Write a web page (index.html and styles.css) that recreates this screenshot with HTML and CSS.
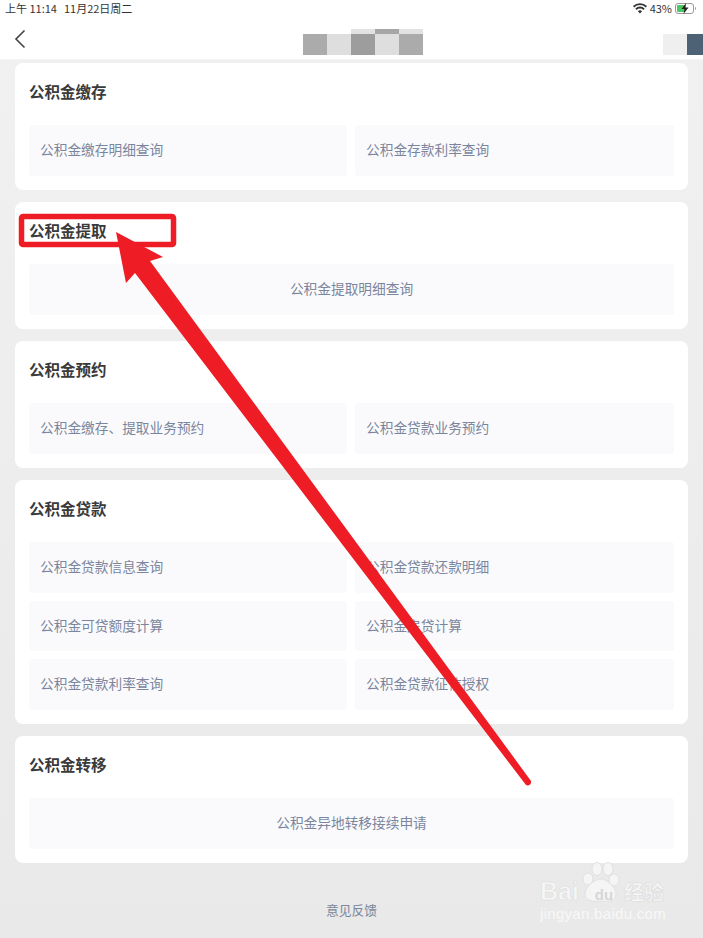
FILE: index.html
```html
<!DOCTYPE html>
<html lang="zh-CN">
<head>
<meta charset="utf-8">
<title>公积金</title>
<link rel="stylesheet" href="styles.css">
</head>
<body>
<div class="page">
  <div class="status">
    <div class="status-left"><span>上午 11:14</span><span>11月22日周二</span></div>
    <div class="status-right">
      <svg class="wifi" width="14" height="11" viewBox="0 0 14 11"><path d="M7 10.500 4.900 8.200a3 3 0 0 1 4.200 0zM3.600 6.900 2.300 5.500a6.800 6.800 0 0 1 9.400 0l-1.300 1.400a4.900 4.900 0 0 0-6.800 0zM1.200 4.400 0 3.100a10 10 0 0 1 14 0l-1.200 1.300a8.300 8.300 0 0 0-11.600 0z" fill="#333"/></svg>
      <span>43%</span>
      <svg class="battery" width="22" height="11" viewBox="0 0 22 11"><rect x=".5" y=".5" width="18" height="10" rx="2.500" fill="#fff" stroke="#999"/><rect x="2" y="2" width="8" height="7" rx="1" fill="#4cc764"/><path d="M20 4v3a1.600 1.600 0 0 0 0-3z" fill="#999"/><path d="M11 0 6.500 6H9.500L8.500 11 13.500 4.500H10.500z" fill="#222"/></svg>
    </div>
  </div>
  <header class="nav">
    <svg class="back" width="12" height="20" viewBox="0 0 12 20"><path d="M10.500 1.500 2 10l8.500 8.500" fill="none" stroke="#444" stroke-width="1.600"/></svg>
    <div class="mosaic">
      <div class="mosaic-top"><i class="m-c"></i><i class="m-d"></i><i class="m-c"></i></div>
      <div class="mosaic-row"><i class="m-a"></i><i class="m-b"></i><i class="m-d"></i><i class="m-b"></i><i class="m-a"></i></div>
    </div>
    <div class="corner"><i class="corner-light"></i><i class="corner-dark"></i></div>
  </header>

  <main class="list">
    <section class="card">
      <h2>公积金缴存</h2>
      <div class="tiles">
        <a class="tile">公积金缴存明细查询</a>
        <a class="tile">公积金存款利率查询</a>
      </div>
    </section>
    <section class="card">
      <h2>公积金提取</h2>
      <div class="tiles">
        <a class="tile wide">公积金提取明细查询</a>
      </div>
    </section>
    <section class="card">
      <h2>公积金预约</h2>
      <div class="tiles">
        <a class="tile">公积金缴存、提取业务预约</a>
        <a class="tile">公积金贷款业务预约</a>
      </div>
    </section>
    <section class="card">
      <h2>公积金贷款</h2>
      <div class="tiles">
        <a class="tile">公积金贷款信息查询</a>
        <a class="tile">公积金贷款还款明细</a>
        <a class="tile">公积金可贷额度计算</a>
        <a class="tile">公积金房贷计算</a>
        <a class="tile">公积金贷款利率查询</a>
        <a class="tile">公积金贷款征信授权</a>
      </div>
    </section>
    <section class="card">
      <h2>公积金转移</h2>
      <div class="tiles">
        <a class="tile wide">公积金异地转移接续申请</a>
      </div>
    </section>
  </main>
  <footer class="feedback">意见反馈</footer>

  <svg class="annotation" width="703" height="938" viewBox="0 0 703 938">
    <rect x="21.500" y="216.500" width="152" height="28" rx="1.500" fill="none" stroke="#ee1c25" stroke-width="5.500"/>
    <path d="M116 232 163 257 150 261 531 781a3.500 3.500 0 0 1-5 4L135 273 126 283z" fill="#ee1c25"/>
  </svg>

  <div class="watermark">
    <svg class="paw" width="38" height="42" viewBox="0 0 38 42">
      <g fill="#f5f5f5" stroke="#dcdcdc" stroke-width=".8">
        <ellipse cx="6" cy="17" rx="5" ry="6"/><ellipse cx="15" cy="7" rx="5" ry="6.500"/><ellipse cx="26" cy="7" rx="5" ry="6.500"/><ellipse cx="32" cy="18" rx="5" ry="6"/>
        <path d="M19 17c6 0 15 8 15 15 0 7-7 8-15 7-8 1-16 0-16-7 0-7 9-15 16-15z"/>
      </g>
    </svg>
    <div class="wm-top"><span class="wm-bai">Bai</span><span class="wm-du">du</span><span class="wm-jy">经验</span></div>
    <div class="wm-url">jingyan.baidu.com</div>
  </div>
</div>
</body>
</html>
```

FILE: styles.css
```css
* { box-sizing: border-box; }
html, body { margin: 0; padding: 0; }
body {
  width: 703px;
  height: 938px;
  overflow: hidden;
  background: linear-gradient(#f1f1f1, #e9e9e9);
  font-family: "Noto Sans CJK SC", "Liberation Sans", sans-serif;
}
.page { position: relative; width: 703px; height: 938px; overflow: hidden; }

.status {
  height: 24px;
  background: #fff;
  display: flex;
  justify-content: space-between;
  align-items: center;
  padding: 0 6px 8px 5px;
  font-size: 11px;
  color: #333;
}
.status-left { display: flex; gap: 7px; }
.status-right { display: flex; align-items: center; gap: 3px; }

.nav {
  height: 36px;
  background: #fff;
  position: relative;
  border-bottom: 1px solid #f4f4f4;
}
.back { position: absolute; left: 14px; top: 5px; }
.mosaic { position: absolute; left: 303px; top: 5px; width: 120px; }
.mosaic i { display: block; }
.mosaic-top { display: flex; margin-left: 48px; height: 5px; }
.mosaic-top i { width: 24px; }
.mosaic-top .m-c { background: #e2e2e2; }
.mosaic-top .m-d { background: #a6a6a6; }
.mosaic-row { display: flex; height: 21px; }
.mosaic-row i { width: 24px; }
.m-a { background: #ababab; }
.m-b { background: #dedede; }
.m-d { background: #9d9d9d; }
.corner { position: absolute; right: 0; top: 10px; display: flex; height: 21px; }
.corner-light { display: block; width: 24px; background: #efefef; }
.corner-dark { display: block; width: 16px; background: #4d6274; }

.list {
  padding: 3px 15px 0;
  display: flex;
  flex-direction: column;
  gap: 12px;
}
.card {
  background: #fff;
  border-radius: 8px;
  padding: 13px 14px 14.500px;
}
.card h2 {
  margin: 0 0 19px;
  font-size: 15.500px;
  line-height: 30px;
  font-weight: 700;
  color: #3a3a3a;
}
.tiles {
  display: grid;
  grid-template-columns: 318px 319px;
  column-gap: 8px;
  row-gap: 8px;
}
.tile {
  height: 50.500px;
  background: #fafafc;
  border-radius: 3px;
  display: flex;
  align-items: center;
  padding: 0 11px 2px;
  font-size: 13.700px;
  color: #7a869e;
}
.tile.wide { grid-column: 1 / -1; justify-content: center; }

.feedback {
  position: absolute;
  left: 0;
  right: 0;
  top: 901px;
  text-align: center;
  font-size: 12.750px;
  line-height: 18px;
  color: #7b8698;
}

.annotation { position: absolute; left: 0; top: 0; pointer-events: none; }

.watermark { position: absolute; left: 537px; top: 860px; width: 166px; height: 70px; color: #f6f6f6; font-family: "Liberation Sans", sans-serif; }
.paw { position: absolute; left: 45px; top: 2px; }
.wm-top { position: absolute; left: 3px; top: 17px; display: flex; align-items: baseline; -webkit-text-stroke: .5px #dadada; }
.wm-bai { font-size: 25px; font-weight: 700; width: 46px; }
.wm-du { font-size: 15px; font-weight: 700; width: 36px; text-align: center; color: #d6d6d6; -webkit-text-stroke: 0; }
.wm-jy { font-size: 20px; font-family: "Noto Sans CJK SC", sans-serif; font-weight: 700; margin-left: 2px; }
.wm-url { position: absolute; left: 3px; top: 45px; font-size: 15px; letter-spacing: .3px; color: #f8f8f8; white-space: nowrap; }
```
